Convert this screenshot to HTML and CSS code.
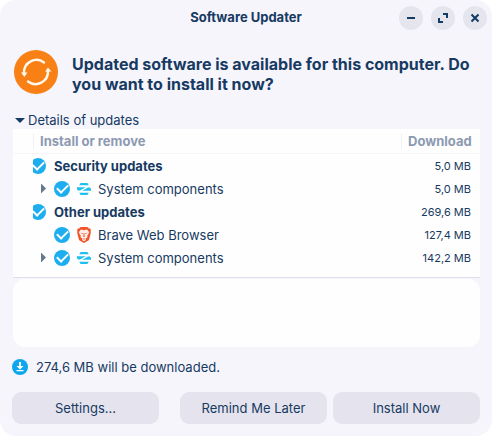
FILE: index.html
```html
<!DOCTYPE html>
<html lang="en">
<head>
<meta charset="utf-8">
<meta name="viewport" content="width=device-width, initial-scale=1">
<title>Software Updater</title>
<link rel="stylesheet" href="styles.css">
</head>
<body>
<svg width="0" height="0" class="defs" aria-hidden="true">
  <symbol id="zorin" viewBox="0 0 14 14">
    <path d="M3.600 1h6.800l1.400 2.200H2.200zM0 5.200h8.800L3 8.600H1L0 7zM14 8.800H5.200L11 5.400h2L14 7zM2.200 10.800h9.600L10.400 13H3.600z" fill="#1fc0ee"/>
  </symbol>
</svg>
<main class="window">
  <header class="titlebar">
    <h1 class="title">Software Updater</h1>
    <div class="controls">
      <button class="control" aria-label="Minimize"><svg viewBox="0 0 24 24"><path d="M8 12h8"/></svg></button>
      <button class="control" aria-label="Maximize"><svg viewBox="0 0 24 24"><path d="M12 8h4v4M8 12v4h4"/></svg></button>
      <button class="control" aria-label="Close"><svg viewBox="0 0 24 24"><path d="M8.500 8.500l7 7M15.500 8.500l-7 7"/></svg></button>
    </div>
  </header>

  <section class="intro">
    <svg class="logo" viewBox="0 0 44 44" aria-hidden="true">
      <circle cx="22" cy="22" r="22" fill="#f98015"/>
      <g fill="none" stroke="#fff8ee" stroke-width="2.400" stroke-linecap="round">
        <path d="M30 12.500A12.500 12.500 0 0 0 10 23"/>
        <path d="M14 31.500A12.500 12.500 0 0 0 34 21"/>
      </g>
      <path d="M7 22.500h6.400L10.400 27zM31 21.500h6.400L34 17.500z" fill="#fff8ee"/>
    </svg>
    <h2 class="message">Updated software is available for this computer. Do you want to install it now?</h2>
  </section>

  <details class="details" open>
    <summary class="summary">Details of updates</summary>
    <table class="updates">
      <colgroup><col class="col-margin"><col><col class="col-size"></colgroup>
      <thead>
        <tr><td></td><th scope="col"><span class="heading">Install or remove</span></th><th scope="col"><span class="heading">Download</span></th></tr>
      </thead>
      <tbody>
        <tr class="group"><td></td><td><label class="item"><input class="check" type="checkbox" checked>Security updates</label></td><td class="size">5,0 MB</td></tr>
        <tr><td></td><td><div class="item child"><button class="expander" aria-label="Expand"></button><label class="item"><input class="check" type="checkbox" checked><svg class="app"><use href="#zorin"/></svg>System components</label></div></td><td class="size">5,0 MB</td></tr>
        <tr class="group"><td></td><td><label class="item"><input class="check" type="checkbox" checked>Other updates</label></td><td class="size">269,6 MB</td></tr>
        <tr><td></td><td><div class="item child"><span class="expander empty"></span><label class="item"><input class="check" type="checkbox" checked><svg class="app brave" viewBox="0 0 14 16"><path d="M3.600 0h6.800l1.400 1.500 1.200-.2 1 2.200-.5 1.300.3 1.200-1.600 6.200q-.3 1-1.200 1.600L7 16l-4-2.200q-.9-.6-1.200-1.600L.2 6l.3-1.200L0 3.500l1-2.200 1.200.2z" fill="#f1562b"/><path d="M4 2.600l3 .6 3-.6 2 2.400-.4 1.700-1.400 2 .3 1.600-2 1.200L9 13l-2 1.200L5 13l.5-1.500-2-1.200.3-1.600-1.400-2L2 5z" fill="#fff0ec"/><path d="M3.600 5.700l2.300.5-.4 1zM10.400 5.700l-2.300.5.4 1zM6.500 6h1L7.400 8.500l.8.7L7 9.900l-1.200-.7.8-.7zM5.800 12L7 11.300l1.200.7-1.200.8z" fill="#f1562b"/></svg>Brave Web Browser</label></div></td><td class="size">127,4 MB</td></tr>
        <tr><td></td><td><div class="item child"><button class="expander" aria-label="Expand"></button><label class="item"><input class="check" type="checkbox" checked><svg class="app"><use href="#zorin"/></svg>System components</label></div></td><td class="size">142,2 MB</td></tr>
      </tbody>
    </table>
    <textarea class="description" aria-label="Technical description" readonly></textarea>
  </details>

  <p class="status">
    <svg class="download" viewBox="0 0 16 16" aria-hidden="true"><circle cx="8" cy="8" r="8" fill="#0ea7ee"/><path d="M7 3h2v4h2.500L8 10.500 4.500 7H7zM4.500 11h7v1.300h-7z" fill="#fff"/></svg>
    274,6 MB will be downloaded.
  </p>

  <footer class="actions">
    <button class="action">Settings…</button>
    <div class="choices">
      <button class="action">Remind Me Later</button>
      <button class="action">Install Now</button>
    </div>
  </footer>
</main>
</body>
</html>
```
FILE: styles.css
```css
* { box-sizing: border-box; }

body {
  margin: 0;
  background: #fff;
  color: #173a62;
  font: 13px/16px Inter, sans-serif;
}

button, input, textarea { font: inherit; color: inherit; border: 0; padding: 0; margin: 0; }
h1, h2, p { margin: 0; }
.defs { position: absolute; }

.window {
  min-height: 100vh;
  padding: 0 12px 12px;
  background: #f6f5fc;
  border-radius: 16px;
}

.titlebar {
  display: grid;
  grid-template-columns: 1fr auto 1fr;
  align-items: center;
  height: 36px;
  margin: 0 -8px;
}
.title { grid-column: 2; padding-bottom: 2px; font-size: 13px; font-weight: 700; }
.controls { display: flex; justify-content: flex-end; gap: 8px; padding-right: 1px; }
.control { width: 24px; height: 24px; border-radius: 50%; background: #e5e5ee; }
.control svg { display: block; fill: none; stroke: #123c66; stroke-width: 2; }

.intro { display: flex; gap: 14px; padding: 14px 0 0 2px; }
.logo { flex: none; width: 44px; height: 44px; }
.message { padding-top: 4px; font-size: 16px; line-height: 20px; font-weight: 700; }

.details { margin-top: 17px; padding-left: 1px; }
.summary { display: flex; align-items: center; gap: 3px; height: 18px; padding-left: 2px; }
.summary::before {
  content: "";
  border: 5px solid transparent;
  border-top-color: #123c66;
  border-bottom: 0;
}

.updates {
  width: 100%;
  table-layout: fixed;
  border-collapse: separate;
  border-spacing: 0;
  padding-bottom: 8px;
  background: #fefefe;
  border-bottom: 1px solid #dedeec;
}
.col-margin { width: 20px; }
.col-size { width: 79px; }
.updates th, .updates td { padding: 0; height: 23px; overflow: hidden; }
.updates thead th, .updates thead td { height: 25px; border-bottom: 1px solid #f5f4f9; }
.updates th { text-align: left; color: #8d9ab2; }
.heading { display: block; padding-left: 6px; border-left: 1px solid #f1f0f7; }
.item { display: flex; align-items: center; }
.group { font-weight: 700; }
.group .item { margin-left: -3px; }
.child { padding-left: 8px; }
.updates .size { padding-right: 9px; text-align: right; font-size: 11px; font-weight: 400; }

.expander {
  width: 5px;
  height: 10px;
  margin-right: 8px;
  background: #657890;
  clip-path: polygon(0 0, 100% 50%, 0 100%);
}
.empty { visibility: hidden; }

.check {
  appearance: none;
  display: grid;
  place-items: center;
  flex: none;
  width: 16px;
  height: 16px;
  margin-right: 8px;
  border-radius: 50%;
  background: #1caeef;
}
.check:checked::before {
  content: "";
  width: 9px;
  height: 5px;
  margin-bottom: 2px;
  border: solid #fff;
  border-width: 0 0 2px 2px;
  transform: rotate(-45deg);
}
.child .check { margin-right: 7px; }
.app { flex: none; width: 14px; height: 14px; margin-right: 7px; }
.brave { height: 16px; }

.description {
  display: block;
  width: 100%;
  height: 68px;
  margin-top: 1px;
  border-radius: 12px;
  background: #fefefe;
  resize: none;
}

.status { display: flex; align-items: center; gap: 8px; margin-top: 12px; }
.download { width: 16px; height: 16px; }

.actions { display: flex; justify-content: space-between; gap: 20px; margin-top: 17px; }
.action { width: 147px; height: 32px; border-radius: 9px; background: #e5e4ee; }
.choices { display: flex; gap: 6px; }
```
